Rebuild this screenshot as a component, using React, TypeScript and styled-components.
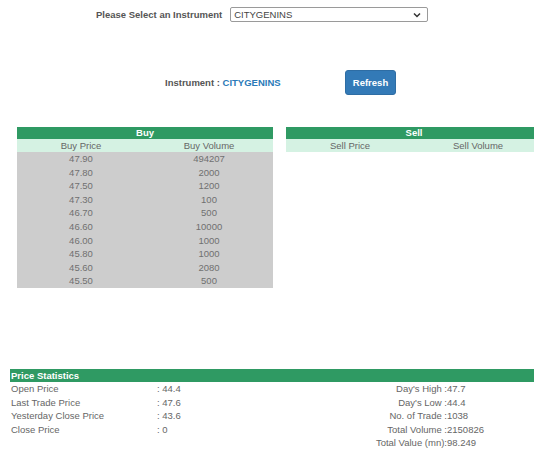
import React from "react";
import styled, { createGlobalStyle } from "styled-components";

const Global = createGlobalStyle`
  html, body { margin: 0; padding: 0; background: #fff; overflow: hidden; }
  body { font-family: "Liberation Sans", Arial, sans-serif; font-size: 9.5px; color: #666; }
`;

const Page = styled.div`
  width: 560px;
  display: flex;
  flex-direction: column;
`;

const SelectRow = styled.div`
  display: flex;
  align-items: center;
  gap: 8px;
  padding: 7px 0 0 96px;
  height: 15px;
`;

const BoldLabel = styled.span`
  font-weight: bold;
  color: #555;
  font-size: 9.5px;
`;

const SelectBox = styled.div`
  width: 198px;
  height: 15px;
  box-sizing: border-box;
  border: 1px solid #9a9a9a;
  border-radius: 2px;
  display: flex;
  align-items: center;
  justify-content: space-between;
  padding: 0 6px 0 3px;
  color: #444;
  font-size: 9.5px;
`;

const InstrumentRow = styled.div`
  display: flex;
  align-items: center;
  margin-top: 48px;
  padding-left: 165px;
  height: 25px;
`;

const InstrumentText = styled.span`
  font-weight: bold;
  color: #555;
  width: 180px;
`;

const Blue = styled.span`
  color: #2a7ab8;
`;

const Button = styled.button`
  width: 51px;
  height: 25px;
  background: #337ab7;
  border: 1px solid #2e6da4;
  border-radius: 3px;
  color: #fff;
  font-family: "Liberation Sans", Arial, sans-serif;
  font-weight: bold;
  font-size: 9.5px;
  padding: 0;
`;

const Tables = styled.div`
  display: flex;
  align-items: flex-start;
  gap: 13px;
  margin-top: 32px;
  padding-left: 17px;
`;

const Table = styled.div`
  width: 256px;
  flex-shrink: 0;
  display: grid;
  grid-template-columns: 1fr 1fr;
`;

const Head = styled.div`
  grid-column: 1 / 3;
  background: #2f9a63;
  color: #fff;
  font-weight: bold;
  text-align: center;
  height: 12px;
  line-height: 12px;
`;

const ColHead = styled.div`
  background: #d5f2e3;
  color: #666;
  text-align: center;
  height: 13px;
  line-height: 13px;
`;

const Cell = styled.div`
  background: #cdcdcd;
  color: #707070;
  text-align: center;
  height: 13.6px;
  line-height: 13.6px;
`;

const Stats = styled.div`
  margin-top: 81px;
  margin-left: 10px;
  width: 540px;
`;

const StatsBar = styled.div`
  background: #2f9a63;
  color: #fff;
  font-weight: bold;
  height: 13px;
  line-height: 13px;
  padding-left: 1px;
`;

const StatsGrid = styled.div`
  display: grid;
  grid-template-columns: 146px 140px 150px 1fr;
  padding-left: 1px;
  color: #666;
`;

const StatCell = styled.div<{ $right?: boolean }>`
  height: 13.6px;
  line-height: 13.6px;
  text-align: ${(p) => (p.$right ? "right" : "left")};
  white-space: nowrap;
`;

const buy: [string, string][] = [
  ["47.90", "494207"],
  ["47.80", "2000"],
  ["47.50", "1200"],
  ["47.30", "100"],
  ["46.70", "500"],
  ["46.60", "10000"],
  ["46.00", "1000"],
  ["45.80", "1000"],
  ["45.60", "2080"],
  ["45.50", "500"],
];

const stats: [string, string, string, string][] = [
  ["Open Price", ": 44.4", "Day's High :", "47.7"],
  ["Last Trade Price", ": 47.6", "Day's Low :", "44.4"],
  ["Yesterday Close Price", ": 43.6", "No. of Trade :", "1038"],
  ["Close Price", ": 0", "Total Volume :", "2150826"],
  ["", "", "Total Value (mn):", "98.249"],
];

export default function App() {
  return (
    <>
      <Global />
      <Page>
        <SelectRow>
          <BoldLabel>Please Select an Instrument</BoldLabel>
          <SelectBox>
            <span>CITYGENINS</span>
            <svg width="8" height="6" viewBox="0 0 8 6">
              <path d="M1 1.5 L4 4.5 L7 1.5" fill="none" stroke="#333" strokeWidth="1.5" />
            </svg>
          </SelectBox>
        </SelectRow>
        <InstrumentRow>
          <InstrumentText>
            Instrument : <Blue>CITYGENINS</Blue>
          </InstrumentText>
          <Button>Refresh</Button>
        </InstrumentRow>
        <Tables>
          <Table>
            <Head>Buy</Head>
            <ColHead>Buy Price</ColHead>
            <ColHead>Buy Volume</ColHead>
            {buy.map(([p, v], i) => (
              <React.Fragment key={i}>
                <Cell>{p}</Cell>
                <Cell>{v}</Cell>
              </React.Fragment>
            ))}
          </Table>
          <Table>
            <Head>Sell</Head>
            <ColHead>Sell Price</ColHead>
            <ColHead>Sell Volume</ColHead>
          </Table>
        </Tables>
        <Stats>
          <StatsBar>Price Statistics</StatsBar>
          <StatsGrid>
            {stats.map((r, i) => (
              <React.Fragment key={i}>
                <StatCell>{r[0]}</StatCell>
                <StatCell>{r[1]}</StatCell>
                <StatCell $right>{r[2]}</StatCell>
                <StatCell>{r[3]}</StatCell>
              </React.Fragment>
            ))}
          </StatsGrid>
        </Stats>
      </Page>
    </>
  );
}
